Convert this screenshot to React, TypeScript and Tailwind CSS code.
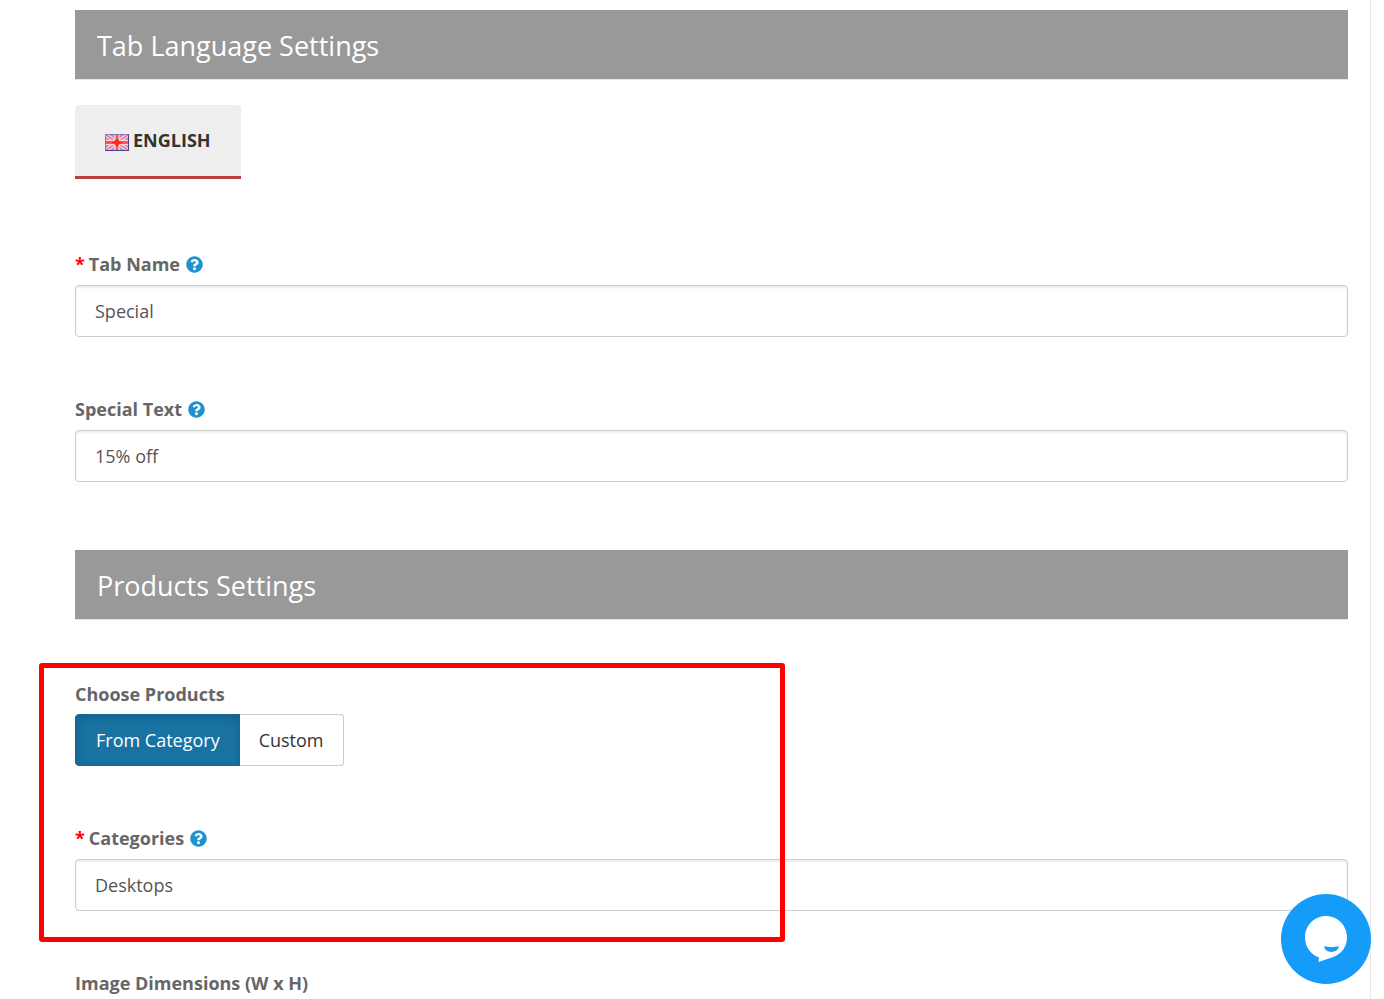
import { useState, type ReactNode } from "react";
import { FaQuestionCircle } from "react-icons/fa";

function SectionHeading({ children }: { children: ReactNode }) {
  return (
    <h2 className="border-b border-[#e5e5e5] bg-[#999999] px-[22px] pt-[18px] pb-[15px] text-[27px] leading-9 text-white">
      {children}
    </h2>
  );
}

type FieldProps = {
  id: string;
  label: string;
  value: string;
  required?: boolean;
};

function Field({ id, label, value, required = false }: FieldProps) {
  return (
    <div className="flex flex-col gap-2">
      <label htmlFor={id} className="flex items-center text-lg leading-[26px] font-bold text-[#666666]">
        {required && <span className="mr-1 text-[#ff0000]">*</span>}
        {label}
        <FaQuestionCircle className="ml-1.5 size-[17px] text-[#1e91cf]" />
      </label>
      <input
        id={id}
        type="text"
        defaultValue={value}
        className="h-[52px] w-full rounded border border-[#cccccc] bg-white px-[19px] text-lg text-[#555555] shadow-[inset_0_2px_2px_rgba(0,0,0,0.075)] outline-none"
      />
    </div>
  );
}

function Flag() {
  return (
    <svg viewBox="0 0 24 17" className="mt-1.5 h-[17px] w-6" aria-hidden="true">
      <rect width="24" height="17" fill="#8c9bea" />
      <path d="M0 0L24 17M24 0L0 17" stroke="#ffe0e6" strokeWidth="3.6" />
      <path d="M0 0L24 17M24 0L0 17" stroke="#ff6a70" strokeWidth="1.5" />
      <path d="M12 0V17M0 8.5H24" stroke="#ffd3da" strokeWidth="5.6" />
      <path d="M12 0V17M0 8.5H24" stroke="#ff5558" strokeWidth="2.8" />
      <path d="M12 4L14.500 7L18 8.500L14.500 10L12 13L9.500 10L6 8.500L9.500 7Z" fill="#ff2a2a" />
      <path d="M.5 16.5V.5H23.5" fill="none" stroke="#7a62a8" strokeOpacity="0.75" />
      <path d="M23.5 .5V16.5H.5" fill="none" stroke="#35307c" strokeOpacity="0.85" />
    </svg>
  );
}

function ProductSource() {
  const [source, setSource] = useState("category");
  const options = [
    { id: "category", label: "From Category" },
    { id: "custom", label: "Custom" },
  ];
  return (
    <div role="group" aria-labelledby="source-label" className="flex flex-col gap-[7px]">
      <span id="source-label" className="text-lg leading-[26px] font-bold text-[#666666]">
        Choose Products
      </span>
      <div className="flex">
        {options.map((o) => (
          <button
            key={o.id}
            type="button"
            aria-pressed={source === o.id}
            onClick={() => setSource(o.id)}
            className={
              "h-[52px] border px-5 text-lg first:rounded-l last:-ml-px last:rounded-r last:border-l-0 last:px-[19px] " +
              (source === o.id
                ? "border-[#15699a] bg-[#1872a2] text-white shadow-[inset_0_3px_8px_rgba(0,0,0,0.16)]"
                : "border-[#cccccc] bg-white text-[#333333]")
            }
          >
            {o.label}
          </button>
        ))}
      </div>
    </div>
  );
}

export default function App() {
  return (
    <div className="min-h-screen bg-white pr-[13px] font-['Open_Sans',sans-serif]">
      <main className="min-h-screen border-r border-[#e8e8e8] pt-2.5 pr-[22px] pl-[75px]">
        <SectionHeading>Tab Language Settings</SectionHeading>

        <div role="tablist" className="mt-[25px] flex">
          <button
            type="button"
            role="tab"
            aria-selected="true"
            className="flex h-[74px] items-center gap-1 rounded-t-[3px] border-b-3 border-[#b93e3d] bg-[#eeeeee] px-[30px] pb-0.5 text-lg font-bold text-[#333333]"
          >
            <Flag />
            ENGLISH
          </button>
        </div>

        <div className="mt-[72px] mb-[68px] flex flex-col gap-[59px]">
          <Field id="tab-name" label="Tab Name" value="Special" required />
          <Field id="special-text" label="Special Text" value="15% off" />
        </div>

        <SectionHeading>Products Settings</SectionHeading>

        <section className="relative mt-[61px] flex flex-col gap-[59px]">
          <ProductSource />
          <Field id="categories" label="Categories" value="Desktops" required />
          <div className="pointer-events-none absolute -top-[18px] -bottom-[31px] -left-9 w-[746px] rounded-[3px] border-5 border-[#ff0000]" />
        </section>

        <h3 className="mt-[59px] text-lg leading-[26px] font-bold text-[#666666]">
          Image Dimensions (W x H)
        </h3>
      </main>

      <button
        type="button"
        aria-label="Open chat"
        className="fixed right-[13px] bottom-[15px] size-[90px] rounded-full bg-[#159cf8]"
      >
        <svg viewBox="0 0 90 90" className="size-full" aria-hidden="true">
          <path
            d="M45 22C33.400 22 24 31.500 24 43.300C24 53 30 61 38 63.500L37.500 68L53 62.800C61 59.500 66 52.500 66 43.300C66 31.500 56.600 22 45 22Z"
            fill="#ffffff"
          />
          <path d="M43 52.300C48 53.400 53 53.400 58 52.300C57 56 54.500 58 50.500 58C46.500 58 43.800 56 43 52.300Z" fill="#159cf8" />
        </svg>
      </button>
    </div>
  );
}
